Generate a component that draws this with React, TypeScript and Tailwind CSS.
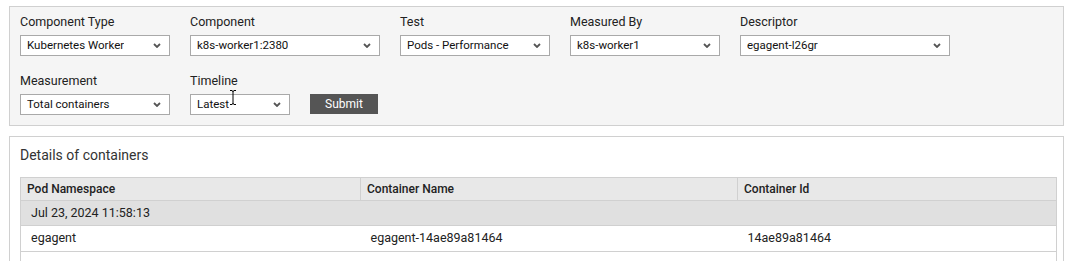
import React from "react";

const font = { fontFamily: "Roboto, 'Noto Sans', Arial, sans-serif" };

function Chevron() {
  return (
    <svg width="8" height="5" viewBox="0 0 8 5" className="shrink-0">
      <path d="M1 1 L4 4 L7 1" fill="none" stroke="#555" strokeWidth="1.8" />
    </svg>
  );
}

function Select({ value, width }: { value: string; width: string }) {
  return (
    <div
      className={`${width} flex h-[21px] items-center justify-between border border-[#a9a9a9] bg-white pl-[6px] pr-[8px] text-[11.5px] text-[#111]`}
    >
      <span className="truncate">{value}</span>
      <Chevron />
    </div>
  );
}

function Field({ label, value, width }: { label: string; value: string; width: string }) {
  return (
    <div className="flex flex-col">
      <label className="mb-[5px] h-[16px] text-[12.5px] leading-[16px] text-[#222]">{label}</label>
      <Select value={value} width={width} />
    </div>
  );
}

function IBeam() {
  return (
    <svg width="8" height="15" viewBox="0 0 8 15" className="absolute left-[229px] top-[90px]">
      <path d="M1 0.5 H3 M5 0.5 H7 M3 0.5 Q4 1 4 2 V13 Q4 14 3 14.5 H1 M4 13 Q4 14 5 14.5 H7 M4 2 Q4 1 5 0.5" fill="none" stroke="#000" strokeWidth="1" />
    </svg>
  );
}

export default function App() {
  return (
    <div className="relative min-h-[261px] bg-white pt-[6px]" style={font}>
      <div className="mx-[9px] border border-[#d0d0d0] bg-[#f5f5f5] pb-[10px] pl-[10px] pt-[7px]">
        <div className="flex gap-[20px]">
          <Field label="Component Type" value="Kubernetes Worker" width="w-[150px]" />
          <Field label="Component" value="k8s-worker1:2380" width="w-[190px]" />
          <Field label="Test" value="Pods - Performance" width="w-[150px]" />
          <Field label="Measured By" value="k8s-worker1" width="w-[150px]" />
          <Field label="Descriptor" value="egagent-l26gr" width="w-[210px]" />
        </div>
        <div className="mt-[17px] flex items-end gap-[20px]">
          <Field label="Measurement" value="Total containers" width="w-[150px]" />
          <Field label="Timeline" value="Latest" width="w-[100px]" />
          <button className="mb-[1px] h-[20px] w-[68px] bg-[#555555] text-[12px] text-white">Submit</button>
        </div>
      </div>

      <div className="mx-[9px] mt-[10px] border border-[#d0d0d0] bg-white pb-[20px] pl-[10px] pr-[9px] pt-[8px]">
        <h2 className="text-[14px] leading-[20px] text-[#333]">Details of containers</h2>
        <table className="mt-[12px] w-[1036px] table-fixed border-collapse text-[#222]">
          <colgroup>
            <col className="w-[340px]" />
            <col className="w-[377px]" />
            <col className="w-[319px]" />
          </colgroup>
          <thead>
            <tr className="h-[23px] bg-[#e8e8e8] text-left text-[12px]">
              <th className="border border-[#d0d0d0] pl-[6px] font-medium">Pod Namespace</th>
              <th className="border border-[#d0d0d0] pl-[6px] font-medium">Container Name</th>
              <th className="border border-[#d0d0d0] pl-[6px] font-medium">Container Id</th>
            </tr>
          </thead>
          <tbody className="text-[12.5px]">
            <tr className="h-[25px] bg-[#e0e0e0]">
              <td colSpan={3} className="border border-[#d0d0d0] pl-[10px]">Jul 23, 2024 11:58:13</td>
            </tr>
            <tr className="h-[26px]">
              <td className="border-y border-l border-[#d0d0d0] pl-[10px]">egagent</td>
              <td className="border-y border-[#d0d0d0] pl-[10px]">egagent-14ae89a81464</td>
              <td className="border-y border-r border-[#d0d0d0] pl-[10px]">14ae89a81464</td>
            </tr>
            <tr className="h-[25px]">
              <td className="border-y border-l border-[#d0d0d0]"></td>
              <td className="border-y border-[#d0d0d0]"></td>
              <td className="border-y border-r border-[#d0d0d0]"></td>
            </tr>
          </tbody>
        </table>
      </div>
      <IBeam />
    </div>
  );
}
